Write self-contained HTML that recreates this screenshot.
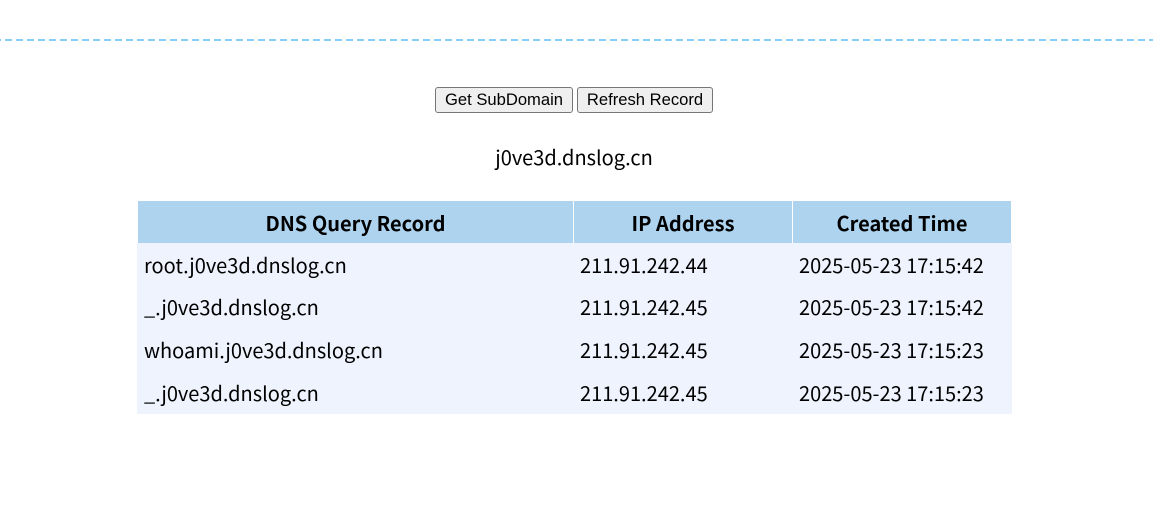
<!DOCTYPE html>
<html><head><meta charset="utf-8"><style>
html,body{margin:0;padding:0;background:#fff;width:1155px;height:517px;overflow:hidden;position:relative}
.line{position:absolute;left:0;top:39px;width:1153px;height:2px;background:repeating-linear-gradient(90deg,#87cefa 0,#87cefa 1px,transparent 1px,transparent 5px,#87cefa 5px,#87cefa 11px)}
button{position:absolute;top:87px;height:26px;box-sizing:border-box;padding:0;font:16.6px "Liberation Sans",sans-serif;color:#000;background:#efefef;border:1px solid #767676;border-radius:3px;text-align:center}
.t{position:absolute;font-family:"Noto Sans CJK SC","Liberation Sans",sans-serif;font-size:20px;line-height:30px;color:#000;white-space:nowrap}
.h{font-weight:700;text-align:center;top:208px}
.bg{position:absolute}
</style></head><body>
<div class="line"></div>
<button style="left:435px;width:138px">Get SubDomain</button>
<button style="left:577px;width:136px">Refresh Record</button>
<div class="t" style="left:0;width:1148px;text-align:center;top:142px">j0ve3d.dnslog.cn</div>
<div class="bg" style="left:138px;top:201px;width:435px;height:42px;background:#add3ef"></div>
<div class="bg" style="left:574px;top:201px;width:218px;height:42px;background:#add3ef"></div>
<div class="bg" style="left:793px;top:201px;width:218px;height:42px;background:#add3ef"></div>
<div class="bg" style="left:137px;top:243px;width:875px;height:171px;background:#eef3fe"></div>
<div class="t h" style="left:138px;width:435px">DNS Query Record</div>
<div class="t h" style="left:574px;width:218px">IP Address</div>
<div class="t h" style="left:793px;width:218px">Created Time</div>
<div class="t" style="left:144px;top:250px">root.j0ve3d.dnslog.cn</div>
<div class="t" style="left:580px;top:250px">211.91.242.44</div>
<div class="t" style="left:799px;top:250px">2025-05-23 17:15:42</div>
<div class="t" style="left:144px;top:292px">_.j0ve3d.dnslog.cn</div>
<div class="t" style="left:580px;top:292px">211.91.242.45</div>
<div class="t" style="left:799px;top:292px">2025-05-23 17:15:42</div>
<div class="t" style="left:144px;top:335px">whoami.j0ve3d.dnslog.cn</div>
<div class="t" style="left:580px;top:335px">211.91.242.45</div>
<div class="t" style="left:799px;top:335px">2025-05-23 17:15:23</div>
<div class="t" style="left:144px;top:378px">_.j0ve3d.dnslog.cn</div>
<div class="t" style="left:580px;top:378px">211.91.242.45</div>
<div class="t" style="left:799px;top:378px">2025-05-23 17:15:23</div>
</body></html>
